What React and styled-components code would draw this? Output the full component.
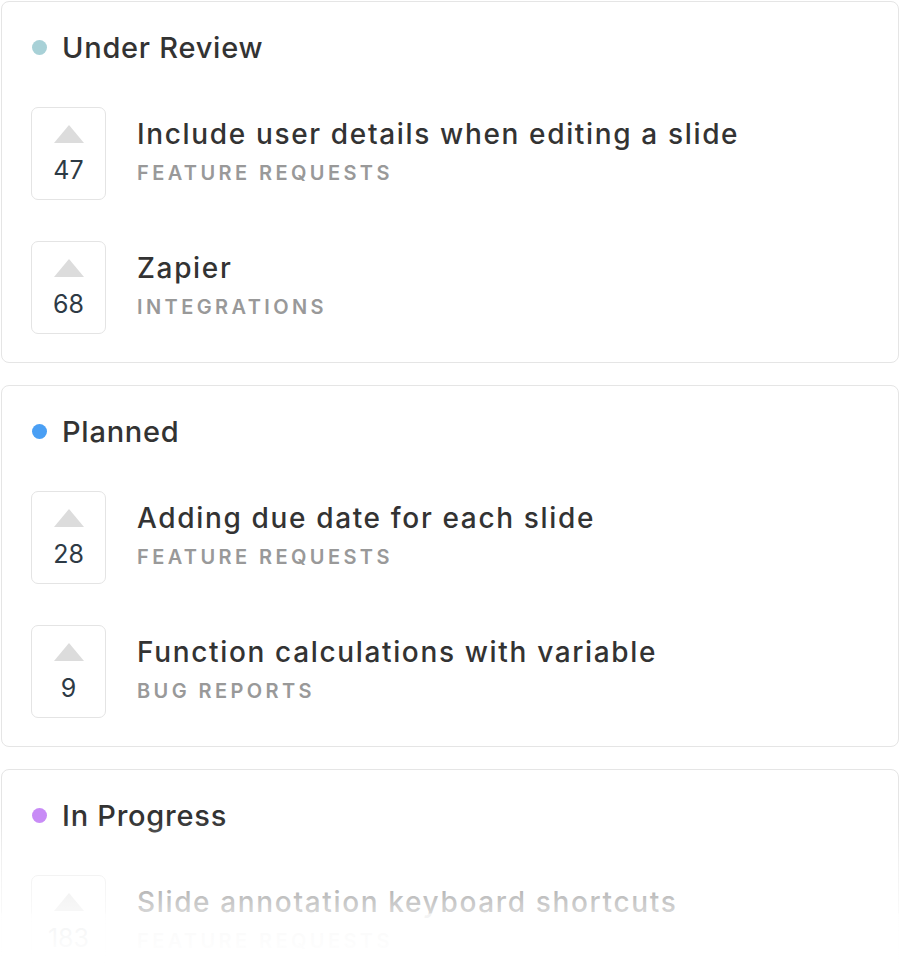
import styled, { createGlobalStyle } from "styled-components";

const GlobalStyle = createGlobalStyle`
  html, body {
    margin: 0;
    padding: 0;
    background: #fff;
  }
  body {
    font-family: Inter, "Noto Sans", "Liberation Sans", sans-serif;
    -webkit-font-smoothing: antialiased;
  }
`;

const columns = [
  {
    name: "Under Review",
    color: "#a8d1d7",
    posts: [
      { votes: 47, title: "Include user details when editing a slide", category: "Feature Requests" },
      { votes: 68, title: "Zapier", category: "Integrations" },
    ],
  },
  {
    name: "Planned",
    color: "#4a9ff4",
    posts: [
      { votes: 28, title: "Adding due date for each slide", category: "Feature Requests" },
      { votes: 9, title: "Function calculations with variable", category: "Bug Reports" },
    ],
  },
  {
    name: "In Progress",
    color: "#c88bf6",
    posts: [
      { votes: 183, title: "Slide annotation keyboard shortcuts", category: "Feature Requests" },
      { votes: 41, title: "Presenter notes on a second screen", category: "Feature Requests" },
    ],
  },
];

const Page = styled.div`
  position: relative;
  height: 965px;
  overflow: hidden;
  padding: 1px;
  box-sizing: border-box;
`;

const Stack = styled.div`
  display: flex;
  flex-direction: column;
  gap: 22px;
`;

const Card = styled.section`
  border: 1px solid #e5e5e5;
  border-radius: 8px;
  padding: 26px 29px 28px;
  background: #fff;
`;

const Header = styled.div`
  display: flex;
  align-items: center;
  gap: 15px;
  margin-left: 1px;
  height: 38px;
`;

const Dot = styled.span`
  width: 15px;
  height: 15px;
  border-radius: 50%;
  background: ${(p) => p.$color};
  flex-shrink: 0;
`;

const Heading = styled.h2`
  margin: 0;
  font-size: 29px;
  font-weight: 500;
  color: #333;
  letter-spacing: 0.75px;
`;

const PostList = styled.div`
  display: flex;
  flex-direction: column;
  gap: 41px;
  margin-top: 41px;
`;

const Post = styled.div`
  display: flex;
  align-items: center;
  gap: 31px;
`;

const VoteBox = styled.div`
  width: 75px;
  height: 93px;
  box-sizing: border-box;
  border: 1px solid #e4e4e4;
  border-radius: 7px;
  display: flex;
  flex-direction: column;
  align-items: center;
  padding-top: 17px;
  flex-shrink: 0;
`;

const Arrow = styled.span`
  width: 0;
  height: 0;
  border-left: 15.5px solid transparent;
  border-right: 15.5px solid transparent;
  border-bottom: 18px solid #dcdcdc;
`;

const Votes = styled.span`
  margin-top: 12px;
  font-size: 25px;
  line-height: 30px;
  color: #2d3a45;
`;

const Info = styled.div`
  display: flex;
  flex-direction: column;
  gap: 10px;
  padding-bottom: 5px;
`;

const Title = styled.div`
  font-size: 28px;
  line-height: 34px;
  font-weight: 500;
  color: #333;
  letter-spacing: 1.65px;
`;

const Category = styled.div`
  font-size: 20px;
  line-height: 24px;
  font-weight: 600;
  color: #999;
  text-transform: uppercase;
  letter-spacing: 3.4px;
`;

const Fade = styled.div`
  position: absolute;
  left: 0;
  right: 0;
  top: 820px;
  bottom: 0;
  pointer-events: none;
  background: linear-gradient(
    to bottom,
    rgba(255, 255, 255, 0) 0px,
    rgba(255, 255, 255, 0.45) 40px,
    rgba(255, 255, 255, 0.8) 93px,
    rgba(255, 255, 255, 0.94) 94px,
    #fff 145px
  );
`;

export default function App() {
  return (
    <>
      <GlobalStyle />
      <Page>
        <Stack>
          {columns.map((col) => (
            <Card key={col.name}>
              <Header>
                <Dot $color={col.color} />
                <Heading>{col.name}</Heading>
              </Header>
              <PostList>
                {col.posts.map((post) => (
                  <Post key={post.title}>
                    <VoteBox>
                      <Arrow />
                      <Votes>{post.votes}</Votes>
                    </VoteBox>
                    <Info>
                      <Title>{post.title}</Title>
                      <Category>{post.category}</Category>
                    </Info>
                  </Post>
                ))}
              </PostList>
            </Card>
          ))}
        </Stack>
        <Fade />
      </Page>
    </>
  );
}
